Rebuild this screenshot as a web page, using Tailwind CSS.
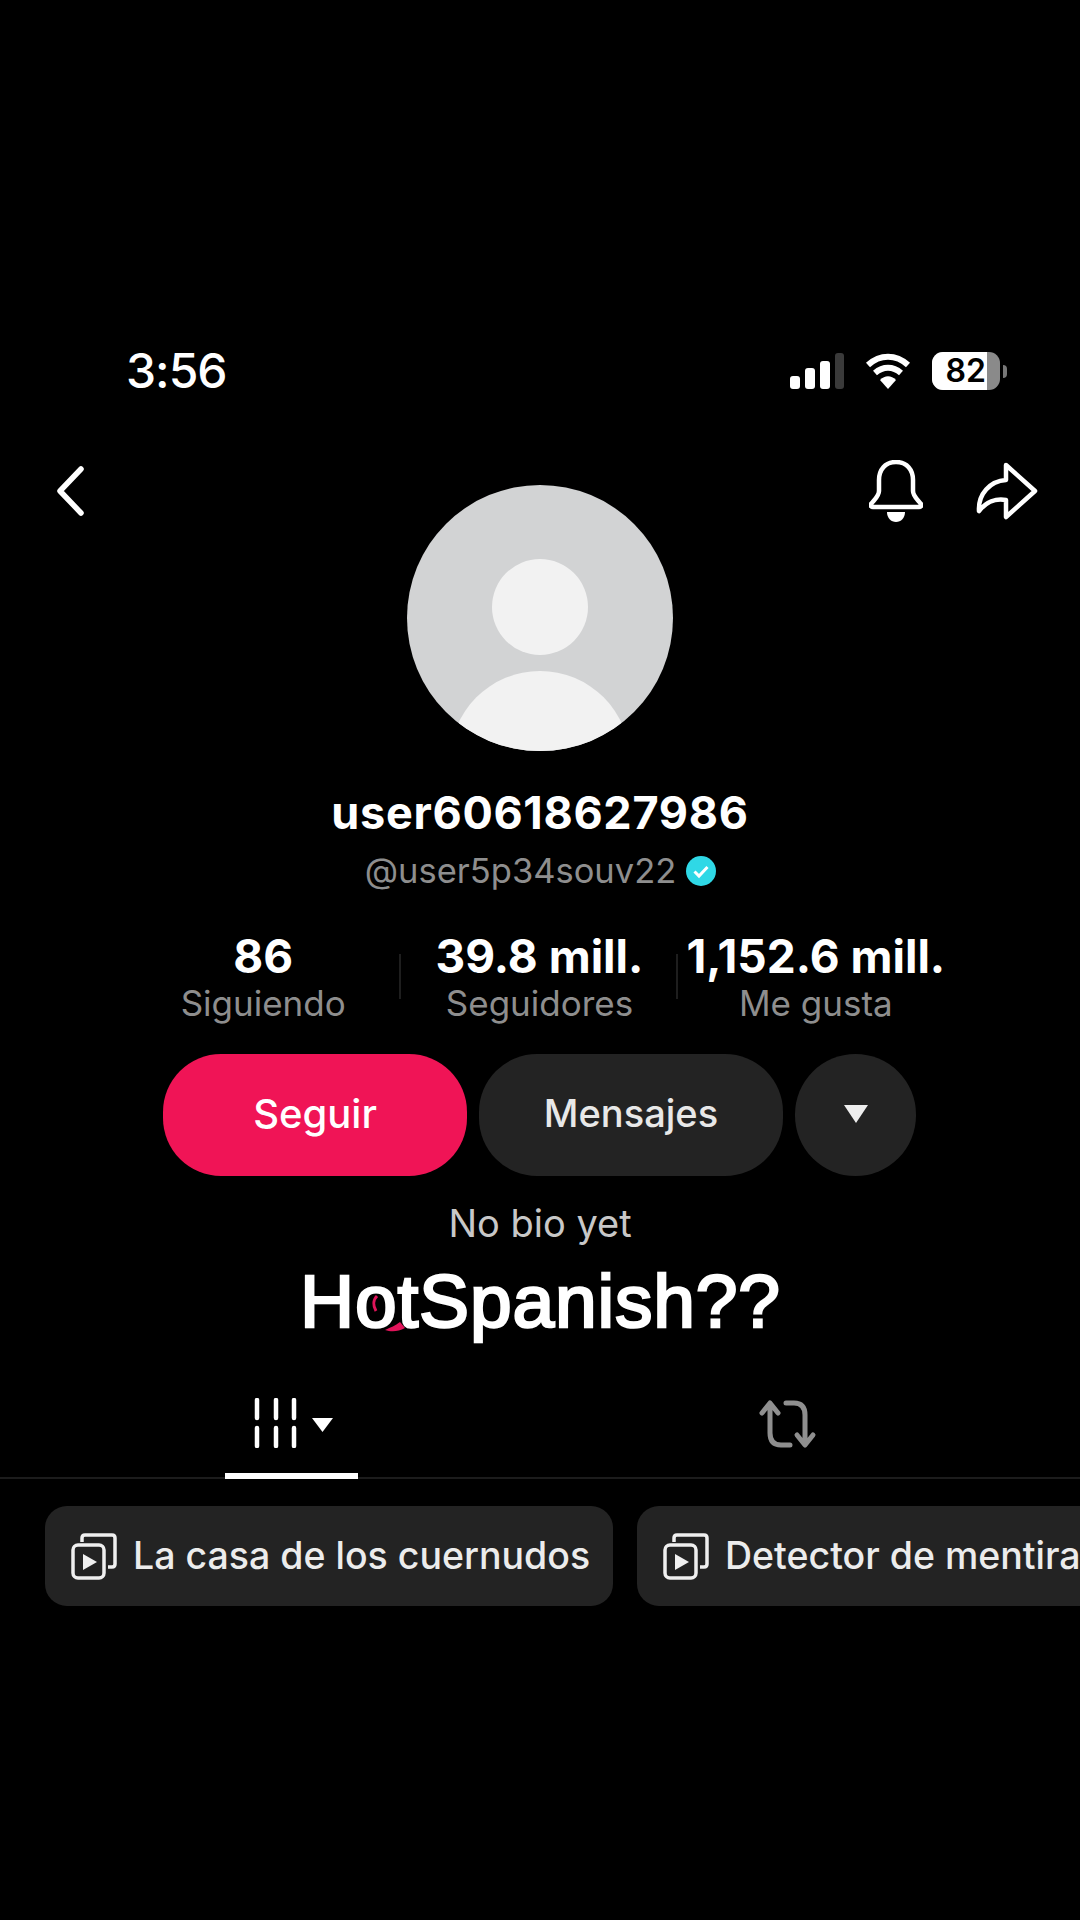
<!DOCTYPE html>
<html lang="en">
<head>
  <meta charset="UTF-8">
  <meta name="viewport" content="width=device-width, initial-scale=1.0">
  <title>Profile</title>
  <script src="https://cdn.jsdelivr.net/npm/@tailwindcss/browser@4"></script>
</head>
<body class="bg-black w-[1080px] h-[1920px] overflow-hidden text-white font-['Inter',sans-serif]">

  <!-- Status bar -->
  <div class="mt-[346px] h-[50px] pl-[126px] pr-[73px] flex items-center justify-between">
    <span class="text-[48px] leading-none font-medium tracking-[-1px]">3:56</span>
    <div class="flex items-center">
      <svg width="54" height="36" viewBox="0 0 54 36" class="mr-[21px]">
        <rect x="0" y="23" width="10" height="13" rx="3" fill="#fff"/>
        <rect x="15" y="15" width="10" height="21" rx="3" fill="#fff"/>
        <rect x="30" y="8" width="10" height="28" rx="3" fill="#fff"/>
        <rect x="45" y="0" width="9" height="36" rx="3" fill="#3a3a3a"/>
      </svg>
      <svg width="46" height="36" viewBox="0 0 46 36" class="mr-[21px]">
        <path d="M3 12C15 1 31 1 43 12M10 20C18 13 28 13 36 20" fill="none" stroke="#fff" stroke-width="6"/>
        <path d="M15 27C20 22 26 22 31 27L23 36Z" fill="#fff"/>
      </svg>
      <div class="w-[68px] h-[38px] rounded-[11px] overflow-hidden bg-[#8a8a8a] flex">
        <div class="w-[55px] h-full bg-white text-black text-[32px] font-semibold leading-[38px] text-right pr-[1px]">82</div>
      </div>
      <div class="w-[4px] h-[13px] ml-[3px] bg-[#777] rounded-r-full"></div>
    </div>
  </div>

  <!-- Nav over the avatar -->
  <div class="relative z-10 mt-[63px] h-[64px] pl-[56px] pr-[42px] flex items-center justify-between">
    <svg width="28" height="50" viewBox="0 0 28 50">
      <path d="M25 3L4 25L25 47" fill="none" stroke="#fff" stroke-width="5.5" stroke-linecap="round" stroke-linejoin="round"/>
    </svg>
    <div class="flex items-center gap-[53px]">
      <svg width="54" height="62" viewBox="0 0 54 62">
        <path d="M27 2C16 2 10 10 10 20V31C10 36 6 39 2 44C1 46 2 47 4 47H50C52 47 53 46 52 44C48 39 44 36 44 31V20C44 10 38 2 27 2Z" fill="none" stroke="#fff" stroke-width="4.5" stroke-linejoin="round"/>
        <path d="M18 52H36C36 58 32 62 27 62C22 62 18 58 18 52Z" fill="#fff"/>
      </svg>
      <svg width="62" height="58" viewBox="0 0 62 58">
        <path d="M30 3L59 29L30 55V38C20 36 10 40 3 49C2 32 14 19 30 18Z" fill="none" stroke="#fff" stroke-width="4.5" stroke-linejoin="round"/>
      </svg>
    </div>
  </div>

  <!-- Avatar -->
  <div class="-mt-[38px] flex justify-center">
    <div class="relative w-[266px] h-[266px] rounded-full bg-[#d2d3d4] overflow-hidden">
      <div class="absolute left-[85px] top-[74px] w-[96px] h-[96px] rounded-full bg-[#f2f2f2]"></div>
      <div class="absolute left-[43px] top-[186px] w-[180px] h-[180px] rounded-full bg-[#f2f2f2]"></div>
    </div>
  </div>

  <!-- Names -->
  <h1 class="mt-[38px] text-center text-[45px] leading-[48px] font-bold tracking-[0.7px]">user60618627986</h1>
  <div class="mt-[12px] h-[44px] flex items-center justify-center gap-[10px] pl-[1px]">
    <span class="text-[34.5px] leading-none text-[#8e8e8e]">@user5p34souv22</span>
    <svg width="30" height="30" viewBox="0 0 30 30">
      <circle cx="15" cy="15" r="15" fill="#2fd8e6"/>
      <path d="M8.5 15.5L13 20L21.5 11" fill="none" stroke="#fff" stroke-width="3"/>
    </svg>
  </div>

  <!-- Stats -->
  <div class="mt-[39px] ml-[125px] w-[829px] grid grid-cols-3">
    <div class="relative text-center">
      <div class="text-[46px] leading-[48px] font-bold">86</div>
      <div class="text-[35px] leading-[46px] text-[#8e8e8e]">Siguiendo</div>
      <div class="absolute right-0 top-[22px] w-[2px] h-[45px] bg-[#1e1e1e]"></div>
    </div>
    <div class="relative text-center">
      <div class="text-[46px] leading-[48px] font-bold">39.8 mill.</div>
      <div class="text-[35px] leading-[46px] text-[#8e8e8e]">Seguidores</div>
      <div class="absolute right-0 top-[22px] w-[2px] h-[45px] bg-[#1e1e1e]"></div>
    </div>
    <div class="text-center">
      <div class="text-[46px] leading-[48px] font-bold whitespace-nowrap">1,152.6 mill.</div>
      <div class="text-[35px] leading-[46px] text-[#8e8e8e]">Me gusta</div>
    </div>
  </div>

  <!-- Buttons -->
  <div class="mt-[28px] ml-[163px] flex gap-[12px] h-[122px]">
    <div class="w-[304px] rounded-[58px] bg-[#f01456] flex items-center justify-center pb-[3px] text-[40px] font-medium">Seguir</div>
    <div class="w-[304px] rounded-[58px] bg-[#232323] flex items-center justify-center pb-[3px] text-[38px] font-medium text-[#e8e8e8]">Mensajes</div>
    <div class="w-[121px] rounded-full bg-[#232323] flex items-center justify-center pb-[2px]">
      <svg width="24" height="18" viewBox="0 0 24 18"><path d="M0 0H24L12 18Z" fill="#eee"/></svg>
    </div>
  </div>

  <!-- Bio -->
  <p class="mt-[25px] text-center text-[38px] leading-[44px] text-[#c8c8c8]">No bio yet</p>
  <div class="relative mt-[13px] w-[480px] mx-auto">
    <p class="text-center text-[75px] leading-[86px] font-normal font-['Liberation_Sans',sans-serif] tracking-[0.8px] whitespace-nowrap [-webkit-text-stroke:2.5px_white]">HotSpanish??</p>
    <!-- bits of the text sitting behind the title -->
    <svg class="absolute left-0 top-0" width="480" height="86" viewBox="0 0 480 86">
      <path d="M85 72C91 74 98 74 105 70L100 64C95 68 91 69 85 72Z" fill="#e0145a"/>
      <path d="M77 38C73 42 73 48 76 53" fill="none" stroke="#e0145a" stroke-width="3"/>
    </svg>
  </div>

  <!-- Tabs -->
  <div class="relative mt-[49px] h-[86px] border-b-2 border-[#1c1c1c]">
    <div class="absolute left-[225px] bottom-[-2px] w-[133px] h-[6px] bg-white"></div>
    <svg class="absolute left-[253px] top-[5px]" width="82" height="50" viewBox="0 0 82 50">
      <path d="M4 2V20M23 2V20M41 2V20M4 30V48M23 30V48M41 30V48" fill="none" stroke="#fff" stroke-width="4.5" stroke-linecap="round"/>
      <path d="M59 20H80L69.5 34Z" fill="#fff"/>
    </svg>
    <svg class="absolute left-[758px] top-[3px]" width="60" height="54" viewBox="0 0 60 54">
      <path d="M12 8V37C12 45 16 49 23 49H32M4 17L12 7L20 17" fill="none" stroke="#8f8f8f" stroke-width="5" stroke-linecap="round" stroke-linejoin="round"/>
      <path d="M28 7H36C43 7 47 11 47 19V48M39 39L47 49L55 39" fill="none" stroke="#8f8f8f" stroke-width="5" stroke-linecap="round" stroke-linejoin="round"/>
    </svg>
  </div>

  <!-- Playlists -->
  <div class="mt-[27px] ml-[45px] flex gap-[24px] h-[100px] whitespace-nowrap">
    <div class="shrink-0 w-[568px] rounded-[22px] bg-[#232323] flex items-center pl-[26px] gap-[16px]">
      <svg width="46" height="48" viewBox="0 0 46 48" class="shrink-0">
        <path d="M11 10V6C11 4 12 3 14 3H41C43 3 44 4 44 6V32C44 34 43 35 41 35H37" fill="none" stroke="#f0f0f0" stroke-width="3.5"/>
        <rect x="2" y="13" width="31" height="33" rx="5" fill="#232323" stroke="#f0f0f0" stroke-width="3.5"/>
        <path d="M12 22L26 30L12 38Z" fill="#f0f0f0"/>
      </svg>
      <span class="text-[37.5px] font-medium text-[#ececec]">La casa de los cuernudos</span>
    </div>
    <div class="shrink-0 w-[568px] rounded-[22px] bg-[#232323] flex items-center pl-[26px] gap-[16px]">
      <svg width="46" height="48" viewBox="0 0 46 48" class="shrink-0">
        <path d="M11 10V6C11 4 12 3 14 3H41C43 3 44 4 44 6V32C44 34 43 35 41 35H37" fill="none" stroke="#f0f0f0" stroke-width="3.5"/>
        <rect x="2" y="13" width="31" height="33" rx="5" fill="#232323" stroke="#f0f0f0" stroke-width="3.5"/>
        <path d="M12 22L26 30L12 38Z" fill="#f0f0f0"/>
      </svg>
      <span class="text-[37.5px] font-medium text-[#ececec]">Detector de mentiras</span>
    </div>
  </div>

</body>
</html>
